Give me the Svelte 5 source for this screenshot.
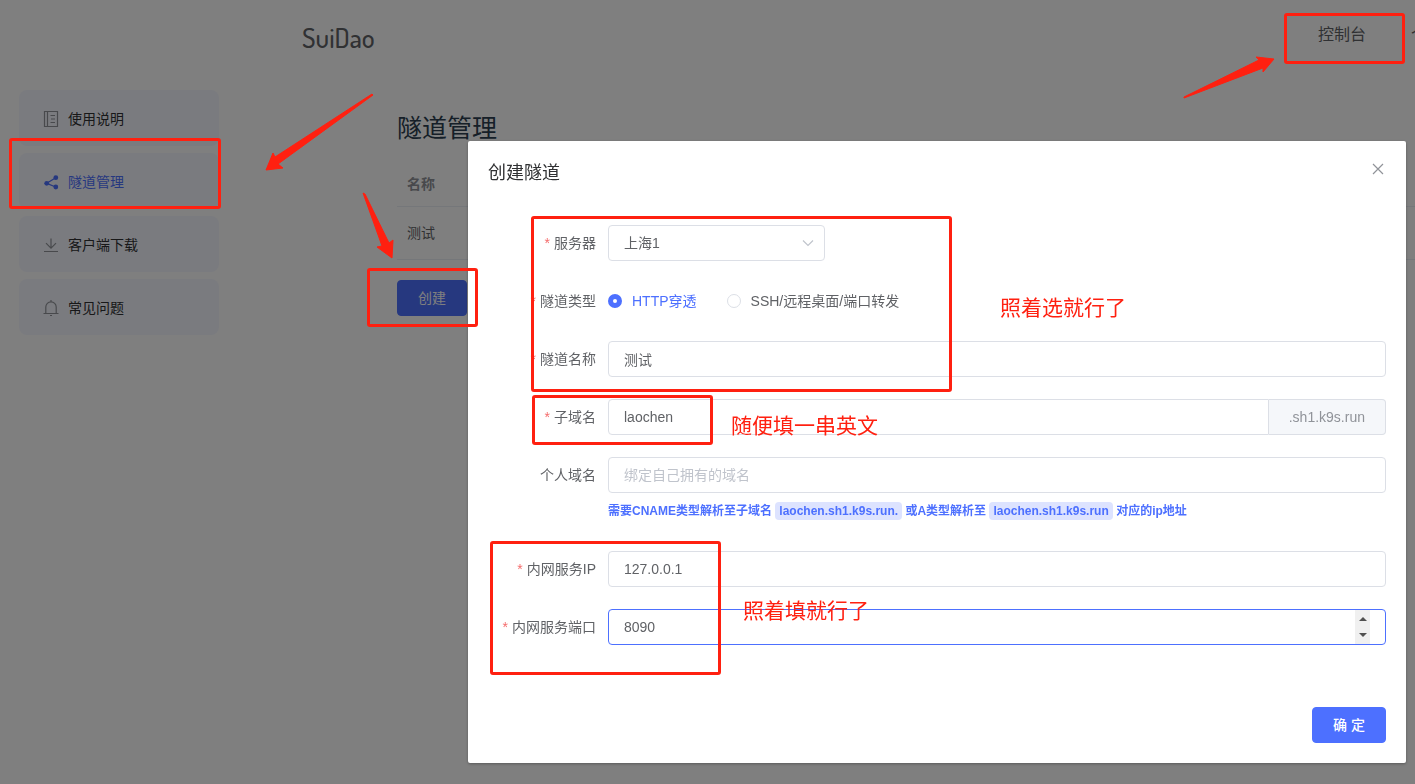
<script lang="ts">
	let server = '上海1';
	let tunnelType = 'http';
	let tunnelName = '测试';
	let subdomain = 'laochen';
	let customDomain = '';
	let localIp = '127.0.0.1';
	let localPort = 8090;
	let active = 'tunnel';

	const suffix = '.sh1.k9s.run';

	const menu = [
		{ id: 'docs', label: '使用说明' },
		{ id: 'tunnel', label: '隧道管理' },
		{ id: 'download', label: '客户端下载' },
		{ id: 'faq', label: '常见问题' }
	];

	// Guide marks: free canvas over the whole page
	const boxes = [
		{ x: 9, y: 138, w: 212, h: 71 },
		{ x: 367, y: 268, w: 111, h: 59 },
		{ x: 1284, y: 13, w: 121, h: 51 },
		{ x: 531, y: 216, w: 421, h: 176 },
		{ x: 532, y: 395, w: 181, h: 50 },
		{ x: 490, y: 541, w: 231, h: 134 }
	];

	const arrows = [
		'372,94 373,95 278,164 283,168 266,170 273,153 275,157',
		'363,193 365,194 389,243 393,240 392,258 377,247 382,246',
		'1184,97 1184,98 1263,68 1263,72 1274,59 1256,57 1259,60'
	];

	const notes = [
		{ x: 1000, y: 315, text: '照着选就行了' },
		{ x: 731, y: 433, text: '随便填一串英文' },
		{ x: 743, y: 618, text: '照着填就行了' }
	];
</script>

<div class="page">
	<header>
		<a class="logo" href="#/">SuiDao</a>
		<nav>
			<a href="#/console">控制台</a>
			<a class="clipped" href="#/user">个</a>
		</nav>
	</header>

	<div class="layout">
		<aside>
			{#each menu as item}
				<button
					class="menu-item"
					class:active={active === item.id}
					on:click={() => (active = item.id)}
				>
					<svg viewBox="0 0 16 16" width="16" height="16" fill="none" stroke="currentColor">
						{#if item.id === 'docs'}
							<path d="M1.5 .5h13v15h-13zM4.5 .5v15M7.5 4.5h4.500M8 8h4M7.500 11.5h4.500" stroke-width="1.2" />
						{:else if item.id === 'tunnel'}
							<path d="M12.7 3.7L3.7 9.3l9 3.7" stroke-width="1.3" />
							<g fill="currentColor" stroke="none">
								<circle cx="12.8" cy="3.7" r="2.4" />
								<circle cx="3.7" cy="9.3" r="2.4" />
								<circle cx="12.8" cy="13" r="2.4" />
							</g>
						{:else if item.id === 'download'}
							<path d="M8 1.5v10M3 6.2l5 5 5-5M1 14.5h14" stroke-width="1.2" />
						{:else}
							<path d="M.5 13.5h15M2.8 13.5V7a5.2 5.2 0 0 1 10.4 0v6.5M8 0v2M7 15.5h2" stroke-width="1.2" />
						{/if}
					</svg>
					<span>{item.label}</span>
				</button>
			{/each}
		</aside>

		<main>
			<h2>隧道管理</h2>
			<table>
				<thead>
					<tr><th>名称</th></tr>
				</thead>
				<tbody>
					<tr><td>测试</td></tr>
				</tbody>
			</table>
			<button class="btn">创建</button>
		</main>
	</div>
</div>

<div class="overlay">
	<div class="dialog" role="dialog" aria-labelledby="dialog-title">
		<div class="dialog-header">
			<h3 id="dialog-title">创建隧道</h3>
			<button class="close" aria-label="关闭">
				<svg viewBox="0 0 16 16" width="16" height="16" fill="none" stroke="currentColor">
					<path d="M3 3l10 10M13 3L3 13" stroke-width="1.2" />
				</svg>
			</button>
		</div>

		<form on:submit|preventDefault>
			<div class="row">
				<label class="label required" for="server">服务器</label>
				<div class="select">
					<select id="server" class="control" bind:value={server}>
						<option>上海1</option>
					</select>
					<svg viewBox="0 0 14 14" width="14" height="14" fill="none" stroke="currentColor">
						<path d="M2 4.5l5 5 5-5" stroke-width="1.2" />
					</svg>
				</div>
			</div>

			<div class="row" role="radiogroup" aria-labelledby="type-label">
				<span class="label required" id="type-label">隧道类型</span>
				<div class="radios">
					<label class="radio">
						<input type="radio" value="http" bind:group={tunnelType} />
						<span>HTTP穿透</span>
					</label>
					<label class="radio">
						<input type="radio" value="tcp" bind:group={tunnelType} />
						<span>SSH/远程桌面/端口转发</span>
					</label>
				</div>
			</div>

			<div class="row">
				<label class="label required" for="name">隧道名称</label>
				<input id="name" class="control" type="text" bind:value={tunnelName} />
			</div>

			<div class="row">
				<label class="label required" for="subdomain">子域名</label>
				<div class="group">
					<input id="subdomain" class="control" type="text" bind:value={subdomain} />
					<span class="append">{suffix}</span>
				</div>
			</div>

			<div class="row">
				<label class="label" for="domain">个人域名</label>
				<div class="field">
					<input
						id="domain"
						class="control"
						type="text"
						placeholder="绑定自己拥有的域名"
						bind:value={customDomain}
					/>
					<p class="hint">
						需要CNAME类型解析至子域名 <code>{subdomain}{suffix}.</code> 或A类型解析至
						<code>{subdomain}{suffix}</code> 对应的ip地址
					</p>
				</div>
			</div>

			<div class="row">
				<label class="label required" for="ip">内网服务IP</label>
				<input id="ip" class="control" type="text" bind:value={localIp} />
			</div>

			<div class="row">
				<label class="label required" for="port">内网服务端口</label>
				<input id="port" class="control focused" type="number" bind:value={localPort} />
			</div>

			<div class="dialog-footer">
				<button class="btn confirm" type="submit">确 定</button>
			</div>
		</form>
	</div>
</div>

<div class="guide">
	<svg>
		{#each arrows as points}
			<polygon {points} />
		{/each}
		{#each notes as n}
			<text x={n.x} y={n.y}>{n.text}</text>
		{/each}
	</svg>
	{#each boxes as b}
		<div class="box" style="left: {b.x}px; top: {b.y}px; width: {b.w}px; height: {b.h}px"></div>
	{/each}
</div>

<style>
	:global(body) {
		margin: 0;
		background: #fff;
		font-family: 'Liberation Sans', 'Noto Sans CJK SC', sans-serif;
		font-size: 14px;
		color: #606266;
	}

	button,
	input,
	select {
		font: inherit;
		color: inherit;
		box-sizing: border-box;
		margin: 0;
	}

	button { cursor: pointer; }

	a {
		color: inherit;
		text-decoration: none;
	}

	.page {
		min-height: 100vh;
		overflow: hidden;
	}

	/* Header */
	header {
		display: flex;
		justify-content: space-between;
		align-items: center;
		height: 70px;
		padding-left: 302px;
	}

	.logo {
		font-family: Dosis, Roboto, sans-serif;
		font-size: 27px;
		font-weight: 500;
		line-height: 32px;
		padding-top: 4px;
		color: #606266;
	}

	nav {
		display: flex;
		gap: 45px;
		font-size: 16px;
		line-height: 24px;
		color: #606266;
	}

	.clipped {
		width: 4px;
		overflow: hidden;
	}

	/* Sidebar and content */
	.layout {
		display: flex;
		gap: 178px;
		padding: 20px 0 0 19px;
	}

	aside {
		display: flex;
		flex-direction: column;
		gap: 7px;
		width: 200px;
		flex-shrink: 0;
	}

	.menu-item {
		display: flex;
		align-items: center;
		gap: 9px;
		height: 56px;
		padding: 0 24px;
		border: none;
		border-radius: 8px;
		background: #f5f7ff;
		color: #303133;
		text-align: left;
	}

	.menu-item svg {
		margin-top: 2px;
		overflow: visible;
		color: #909399;
	}

	.menu-item.active,
	.menu-item.active svg { color: #4d70ff; }

	main {
		flex: 1;
		padding-top: 20px;
	}

	h2 {
		margin: 0;
		font-size: 25px;
		line-height: 36px;
		font-weight: 400;
		color: #2c3e50;
	}

	table {
		width: 100%;
		margin: 16px 0 20px;
		border-collapse: collapse;
	}

	th,
	td {
		box-sizing: border-box;
		padding: 0 10px;
		border-bottom: 1px solid #ebeef5;
		text-align: left;
		line-height: 24px;
	}

	th {
		height: 44px;
		color: #909399;
	}

	td { height: 53px; }

	.btn {
		height: 36px;
		padding: 0 20px;
		border: 1px solid #4d70ff;
		border-radius: 4px;
		background: #4d70ff;
		color: #fff;
		line-height: 32px;
	}

	/* Dialog */
	.overlay {
		position: fixed;
		inset: 0;
		display: flex;
		align-items: flex-start;
		padding: 141px 9px 0 468px;
		background: rgba(0, 0, 0, 0.5);
		overflow: auto;
	}

	.dialog {
		flex: 1;
		border-radius: 2px;
		background: #fff;
		box-shadow: 0 1px 3px rgba(0, 0, 0, 0.3);
	}

	.dialog-header {
		display: flex;
		justify-content: space-between;
		align-items: center;
		padding: 20px 20px 10px;
	}

	h3 {
		margin: 0;
		font-size: 18px;
		line-height: 24px;
		font-weight: 400;
		color: #303133;
	}

	.close {
		display: flex;
		padding: 0 0 8px;
		border: none;
		background: none;
		color: #909399;
	}

	form { padding: 30px 20px 20px; }

	.row {
		display: flex;
		margin-bottom: 22px;
	}

	.label {
		box-sizing: border-box;
		width: 120px;
		flex-shrink: 0;
		padding-right: 12px;
		line-height: 36px;
		text-align: right;
		white-space: nowrap;
	}

	.required::before {
		content: '*';
		margin-right: 4px;
		color: #f56c6c;
	}

	.control {
		flex: 1;
		width: 100%;
		height: 36px;
		padding: 0 15px;
		border: 1px solid #dcdfe6;
		border-radius: 4px;
		outline: none;
		background: #fff;
	}

	.control:focus,
	.control.focused { border-color: #4d70ff; }
	.control::placeholder { color: #c0c4cc; }

	.control::-webkit-inner-spin-button {
		-webkit-appearance: none;
		width: 15px;
		height: 34px;
		background: #f0f0f0 url("data:image/svg+xml,%3Csvg xmlns='http://www.w3.org/2000/svg' width='15' height='34' fill='%23505050'%3E%3Cpath d='M4 11l4-4 4 4zM4 23l4 4 4-4z'/%3E%3C/svg%3E");
		opacity: 1;
	}

	.select {
		display: grid;
		align-items: center;
		width: 217px;
	}

	.select > * { grid-area: 1 / 1; }

	.select select {
		appearance: none;
	}

	.select svg {
		justify-self: end;
		margin-right: 10px;
		color: #c0c4cc;
		pointer-events: none;
	}

	.radios {
		display: flex;
		gap: 30px;
	}

	.radio {
		display: flex;
		align-items: center;
		gap: 10px;
		height: 36px;
		line-height: 36px;
	}

	.radio input {
		appearance: none;
		width: 14px;
		height: 14px;
		border: 1px solid #dcdfe6;
		border-radius: 50%;
		background: #fff;
	}

	.radio input:checked { border: 5px solid #4d70ff; }
	.radio input:checked + span { color: #4d70ff; }

	.group {
		display: flex;
		flex: 1;
	}

	.group .control { border-radius: 4px 0 0 4px; }

	.append {
		padding: 0 20px;
		border: 1px solid #dcdfe6;
		border-left: none;
		border-radius: 0 4px 4px 0;
		background: #f5f7fa;
		color: #909399;
		line-height: 34px;
	}

	.field { flex: 1; }

	.hint {
		margin: 0;
		padding-top: 1px;
		font-size: 12px;
		line-height: 35px;
		font-weight: 700;
		color: #4d70ff;
	}

	code {
		padding: 2px 4px;
		border-radius: 4px;
		background: #dde3ff;
		font-family: inherit;
	}

	.dialog-footer {
		display: flex;
		justify-content: flex-end;
		padding-top: 40px;
	}

	.confirm { font-weight: 500; }

	/* Guide marks */
	.guide {
		position: fixed;
		inset: 0;
		pointer-events: none;
	}

	.guide svg {
		width: 100%;
		height: 100%;
		fill: #ff2010;
		font-size: 21px;
	}

	.guide polygon {
		stroke: #ff2010;
		stroke-width: 1;
		stroke-linejoin: round;
	}

	.box {
		position: absolute;
		box-sizing: border-box;
		border: 3px solid #ff2010;
		border-radius: 3px;
	}
</style>
